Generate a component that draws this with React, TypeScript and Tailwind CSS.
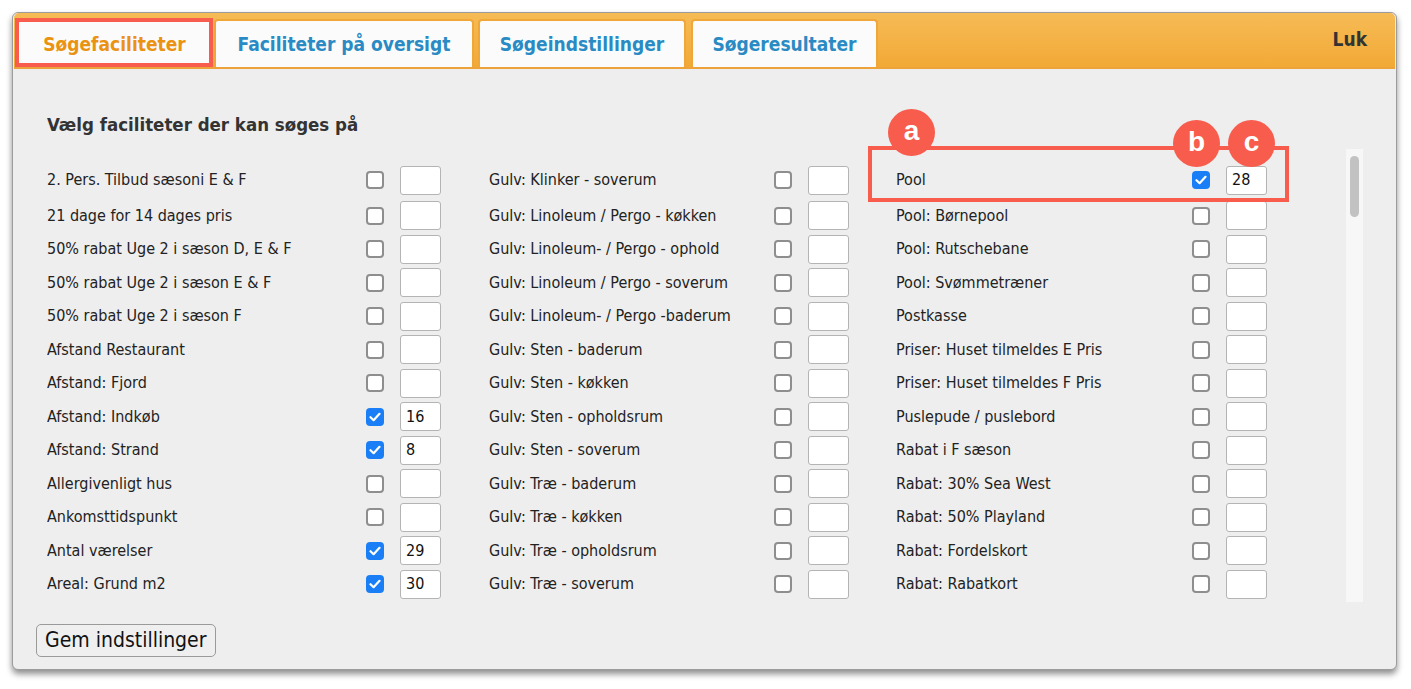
import React from "react";

const col1: [string, boolean, string][] = [
  ["2. Pers. Tilbud sæsoni E & F", false, ""],
  ["21 dage for 14 dages pris", false, ""],
  ["50% rabat Uge 2 i sæson D, E & F", false, ""],
  ["50% rabat Uge 2 i sæson E & F", false, ""],
  ["50% rabat Uge 2 i sæson F", false, ""],
  ["Afstand Restaurant", false, ""],
  ["Afstand: Fjord", false, ""],
  ["Afstand: Indkøb", true, "16"],
  ["Afstand: Strand", true, "8"],
  ["Allergivenligt hus", false, ""],
  ["Ankomsttidspunkt", false, ""],
  ["Antal værelser", true, "29"],
  ["Areal: Grund m2", true, "30"],
  ["", false, ""],
];
const col2: [string, boolean, string][] = [
  ["Gulv: Klinker - soverum", false, ""],
  ["Gulv: Linoleum / Pergo - køkken", false, ""],
  ["Gulv: Linoleum- / Pergo - ophold", false, ""],
  ["Gulv: Linoleum / Pergo - soverum", false, ""],
  ["Gulv: Linoleum- / Pergo -baderum", false, ""],
  ["Gulv: Sten - baderum", false, ""],
  ["Gulv: Sten - køkken", false, ""],
  ["Gulv: Sten - opholdsrum", false, ""],
  ["Gulv: Sten - soverum", false, ""],
  ["Gulv: Træ - baderum", false, ""],
  ["Gulv: Træ - køkken", false, ""],
  ["Gulv: Træ - opholdsrum", false, ""],
  ["Gulv: Træ - soverum", false, ""],
  ["", false, ""],
];
const col3: [string, boolean, string][] = [
  ["Pool", true, "28"],
  ["Pool: Børnepool", false, ""],
  ["Pool: Rutschebane", false, ""],
  ["Pool: Svømmetræner", false, ""],
  ["Postkasse", false, ""],
  ["Priser: Huset tilmeldes E Pris", false, ""],
  ["Priser: Huset tilmeldes F Pris", false, ""],
  ["Puslepude / puslebord", false, ""],
  ["Rabat i F sæson", false, ""],
  ["Rabat: 30% Sea West", false, ""],
  ["Rabat: 50% Playland", false, ""],
  ["Rabat: Fordelskort", false, ""],
  ["Rabat: Rabatkort", false, ""],
  ["", false, ""],
];

function Check({ on }: { on: boolean }) {
  if (on)
    return (
      <div className="w-[18px] h-[18px] rounded-[4px] bg-[#1a7ff7] flex items-center justify-center">
        <svg width="12" height="10" viewBox="0 0 12 10">
          <path d="M1.5 5.2 L4.6 8.2 L10.5 1.8" fill="none" stroke="white" strokeWidth="2.2" strokeLinecap="round" strokeLinejoin="round" />
        </svg>
      </div>
    );
  return <div className="w-[18px] h-[18px] rounded-[4px] bg-white border-2 border-[#8e8e8e]" />;
}

function Box({ v }: { v: string }) {
  return (
    <div className="w-[41px] h-[29px] bg-white border border-[#b4b4b4] rounded-[3px] pl-[5px] flex items-center text-[16px] font-medium text-[#111]">
      {v}
    </div>
  );
}

function Cell({ item, labelW, hidden }: { item: [string, boolean, string]; labelW: string; hidden?: boolean }) {
  return (
    <div className="flex items-center">
      <div className={`${labelW} text-[16px] text-[#222] whitespace-nowrap`}>{item[0]}</div>
      <div className="w-[34px]">{hidden ? null : <Check on={item[1]} />}</div>
      <Box v={item[2]} />
    </div>
  );
}

export default function App() {
  return (
    <div
      className="w-[1411px] h-[689px] bg-white relative overflow-hidden"
      style={{ fontFamily: '"DejaVu Sans Condensed", "DejaVu Sans", sans-serif' }}
    >
      <div className="absolute left-[12px] top-[12px] w-[1385px] h-[658px] rounded-[6px] border border-[#9c9c9c] bg-[#eeeeee] shadow-[0_4px_6px_rgba(0,0,0,0.45)] flex flex-col">
        {/* header */}
        <div className="mx-[1px] h-[56px] rounded-t-[5px] bg-gradient-to-b from-[#f6bb55] to-[#f2a935] border-b-2 border-[#eda33a] flex items-end pl-[3px] pr-[28px]">
          <div className="h-[48px] w-[195px] bg-[#fbfbfb] rounded-t-[4px] border-2 border-b-0 border-[#f0a73a] flex items-center justify-center text-[19px] font-bold text-[#ea9312]">
            Søgefaciliteter
          </div>
          <div className="h-[48px] w-[260px] ml-[2px] bg-[#fbfbfb] rounded-t-[4px] border-2 border-b-0 border-[#f0a73a] flex items-center justify-center text-[19px] font-bold text-[#2a8bc4]">
            Faciliteter på oversigt
          </div>
          <div className="h-[48px] w-[208px] ml-[4px] bg-[#fbfbfb] rounded-t-[4px] border-2 border-b-0 border-[#f0a73a] flex items-center justify-center text-[19px] font-bold text-[#2a8bc4]">
            Søgeindstillinger
          </div>
          <div className="h-[48px] w-[187px] ml-[5px] bg-[#fbfbfb] rounded-t-[4px] border-2 border-b-0 border-[#f0a73a] flex items-center justify-center text-[19px] font-bold text-[#2a8bc4]">
            Søgeresultater
          </div>
          <div className="flex-1" />
          <div className="self-center text-[19px] font-bold text-[#333] pb-[2px]">Luk</div>
        </div>

        {/* body */}
        <div className="pl-[34px] pt-[43px] relative">
          <div className="text-[18.5px] font-bold text-[#333] h-[26px] leading-[26px]">
            Vælg faciliteter der kan søges på
          </div>
          <div className="mt-[11px] h-[453px] w-[1316px] flex overflow-hidden">
            <div className="flex-1 pt-[12px]">
              {col1.map((_, r) => (
                <div key={r} className={`flex items-center ${r === 0 ? "h-[38px]" : "h-[33.5px]"}`}>
                  <Cell item={col1[r]} labelW="w-[319px]" hidden={r === 13} />
                  <div className="w-[48px]" />
                  <Cell item={col2[r]} labelW="w-[285px]" hidden={r === 13} />
                  <div className="w-[47px]" />
                  <Cell item={col3[r]} labelW="w-[296px]" hidden={r === 13} />
                </div>
              ))}
            </div>
            <div className="w-[17px] h-full bg-[#f7f7f7] flex justify-center pt-[7px]">
              <div className="w-[9px] h-[61px] rounded-full bg-[#c2c2c2]" />
            </div>
          </div>
        </div>

        <div className="pl-[23px] mt-[22px]">
          <button className="h-[33px] px-[8px] rounded-[5px] border border-[#9a9a9a] bg-[#efefef] text-[21px] text-[#111] leading-none">
            Gem indstillinger
          </button>
        </div>
      </div>

      {/* annotations */}
      <div className="absolute left-[15px] top-[18px] w-[198px] h-[49px] border-4 border-[#f75c4c]" />
      <div className="absolute left-[868px] top-[146px] w-[421px] h-[56px] border-4 border-[#f75c4c]" />
      <div className="absolute left-[888px] top-[109px] w-[47px] h-[47px] rounded-full bg-[#f75c4c] flex items-center justify-center text-white text-[28px] font-bold leading-none pb-[4px]" style={{ fontFamily: '"Liberation Sans", sans-serif' }}>a</div>
      <div className="absolute left-[1173px] top-[120px] w-[47px] h-[47px] rounded-full bg-[#f75c4c] flex items-center justify-center text-white text-[28px] font-bold leading-none pb-[4px]" style={{ fontFamily: '"Liberation Sans", sans-serif' }}>b</div>
      <div className="absolute left-[1228px] top-[120px] w-[47px] h-[47px] rounded-full bg-[#f75c4c] flex items-center justify-center text-white text-[28px] font-bold leading-none pb-[4px]" style={{ fontFamily: '"Liberation Sans", sans-serif' }}>c</div>
    </div>
  );
}
